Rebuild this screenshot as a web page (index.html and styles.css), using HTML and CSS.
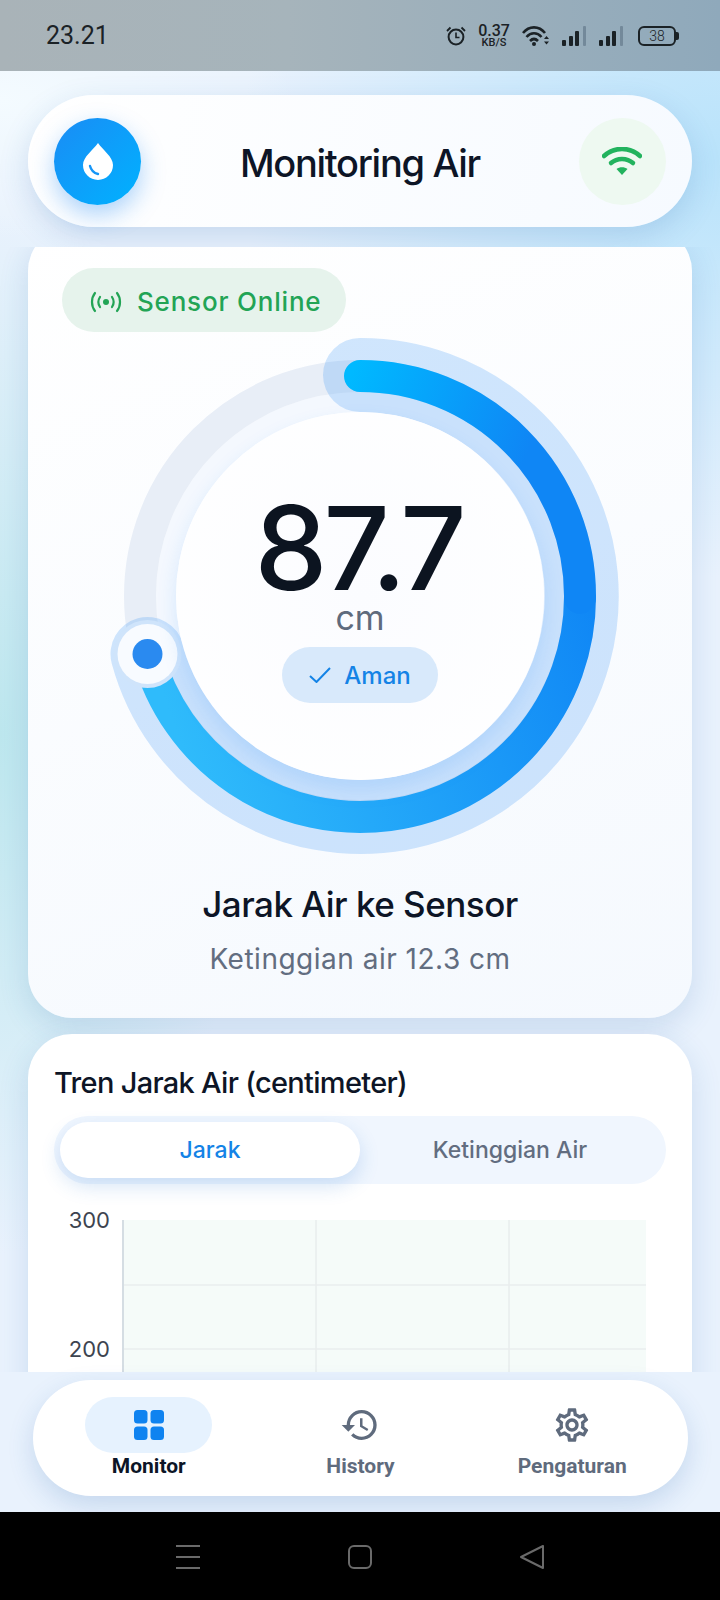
FILE: index.html
```html
<!DOCTYPE html>
<html lang="id">

<head>
    <meta charset="UTF-8">
    <meta name="viewport" content="width=device-width">
    <title>Monitoring Air</title>
    <link rel="stylesheet" href="styles.css">
</head>

<body>
    <div class="statusbar">
        <span class="time">23.21</span>
        <div class="status-icons">
            <svg width="20" height="20" viewBox="0 0 20 20" fill="none" stroke="#1b2226">
                <circle cx="10" cy="11" r="7.4" stroke-width="2" />
                <path d="M10 6.500V11.500H13.500" stroke-width="1.6" />
                <path d="M1 5 4.500 1.500M19 5 15.500 1.500" stroke-width="1.8" />
            </svg>
            <div class="speed"><b>0.37</b><small>KB/S</small></div>
            <svg width="28" height="20" viewBox="0 0 28 20" fill="none" stroke="#1b2226" stroke-width="2.6">
                <path d="M1 7C7-.5 17-.5 23 7" />
                <path d="M4.500 11C9 6 15 6 19.500 11" />
                <path d="M8 15C10.500 12.500 13.500 12.500 16 15" />
                <circle cx="12" cy="18" r="2" fill="#1b2226" stroke="none" />
                <path d="M24.500 10 27 13H22ZM24.500 18.500 22 15.500H27Z" fill="#1b2226" stroke="none" />
            </svg>
            <svg width="25" height="20" viewBox="0 0 25 20" fill="#1b2226">
                <rect x="0" y="14" width="4" height="6" rx="1" />
                <rect x="7" y="10" width="4" height="10" rx="1" />
                <rect x="13" y="5" width="4" height="15" rx="1" />
                <rect x="21" y="0" width="3" height="20" rx="1" fill="#73899a" />
            </svg>
            <svg width="25" height="20" viewBox="0 0 25 20" fill="#1b2226">
                <rect x="0" y="14" width="4" height="6" rx="1" />
                <rect x="7" y="10" width="4" height="10" rx="1" />
                <rect x="13" y="5" width="4" height="15" rx="1" />
                <rect x="21" y="0" width="3" height="20" rx="1" fill="#73899a" />
            </svg>
            <div class="battery">38</div>
        </div>
    </div>

    <div class="screen">
        <div class="topbar">
            <header class="header">
                <div class="logo">
                    <svg width="32" height="37" viewBox="0 0 32 37">
                        <path d="M16 0C21 7 31 14 31 22A15 15 0 0 1 1 22C1 14 11 7 16 0Z" fill="#fff" />
                        <path d="M8 23C9 27 12 30 16 31" fill="none" stroke="#1696f7" stroke-width="2.4" stroke-linecap="round" />
                    </svg>
                </div>
                <h1>Monitoring Air</h1>
                <div class="wifi">
                    <svg width="40" height="28" viewBox="0 0 40 28" fill="none" stroke="#22b35e" stroke-width="4.500">
                        <path d="M2 9C12-.5 28-.5 38 9" stroke-linecap="round" />
                        <path d="M9 16C15 10.500 25 10.500 31 16" stroke-linecap="round" />
                        <path d="M20 28 14.500 22C17.500 19.500 22.500 19.500 25.500 22Z" fill="#22b35e" stroke="none" />
                    </svg>
                </div>
            </header>
        </div>

        <main class="content">
            <section class="card card-gauge">
                <div class="online">
                    <svg width="32" height="22" viewBox="0 0 32 22" fill="none" stroke="#22a455" stroke-width="2.200" stroke-linecap="round">
                        <path d="M5 2C1 7 1 15 5 20M27 2C31 7 31 15 27 20" />
                        <path d="M10 6C8 9 8 13 10 16M22 6C24 9 24 13 22 16" />
                        <circle cx="16" cy="11" r="3" fill="#22a455" stroke="none" />
                    </svg>
                    <span>Sensor Online</span>
                </div>

                <div class="gauge">
                    <svg width="520" height="520" viewBox="0 0 520 520" fill="none">
                        <defs>
                            <linearGradient id="arcTop" gradientUnits="userSpaceOnUse" x1="250" y1="40" x2="430" y2="110">
                                <stop offset="0" stop-color="#00b9ff" />
                                <stop offset="1" stop-color="#0f86f5" />
                            </linearGradient>
                            <linearGradient id="arcBottom" gradientUnits="userSpaceOnUse" x1="480" y1="200" x2="60" y2="350">
                                <stop offset="0" stop-color="#0f86f5" />
                                <stop offset="1" stop-color="#2fbbfb" />
                            </linearGradient>
                        </defs>
                        <circle cx="260" cy="260" r="194" stroke="#f4f8fe" stroke-width="20" />
                        <circle cx="260" cy="260" r="220" stroke="#e8eef7" stroke-width="32" />
                        <path d="M260 39A221 221 0 1 1 47.500 318" stroke="#1e88f5" stroke-opacity=".2" stroke-width="74" stroke-linecap="round" />
                        <path d="M480 260A220 220 0 0 1 47.500 318" stroke="url(#arcBottom)" stroke-width="32" />
                        <path d="M260 40A220 220 0 0 1 480 262" stroke="url(#arcTop)" stroke-width="32" stroke-linecap="round" />
                        <circle cx="47.500" cy="318" r="34" fill="#cfe4fb" />
                        <circle cx="47.500" cy="318" r="30" fill="#f8fbff" />
                        <circle cx="47.500" cy="318" r="15" fill="#2a8af0" />
                    </svg>
                    <div class="gauge-center">
                        <div class="value">87.7</div>
                        <div class="unit">cm</div>
                        <div class="safe">
                            <svg width="22" height="16" viewBox="0 0 22 16" fill="none" stroke="#1483e6" stroke-width="2">
                                <path d="M1 9 7.500 15 21 1" />
                            </svg>
                            <span>Aman</span>
                        </div>
                    </div>
                </div>

                <h2>Jarak Air ke Sensor</h2>
                <p class="level">Ketinggian air 12.3 cm</p>
            </section>

            <section class="card card-chart">
                <h3>Tren Jarak Air (centimeter)</h3>
                <div class="tabs">
                    <div class="tab active">Jarak</div>
                    <div class="tab">Ketinggian Air</div>
                </div>
                <svg class="chart" width="610" height="192" viewBox="0 -12 610 192">
                    <rect x="69" y="0" width="523" height="180" fill="#f5fbf9" />
                    <path d="M69 65H592M69 129H592M262 0V180M455 0V180" stroke="#e9eeee" stroke-width="1.600" fill="none" />
                    <path d="M69 0V180" stroke="#d5dde3" stroke-width="2" fill="none" />
                    <text x="56" y="8" text-anchor="end">300</text>
                    <text x="56" y="137" text-anchor="end">200</text>
                </svg>
            </section>
        </main>

        <div class="bottom">
            <nav class="nav">
                <a class="nav-item active">
                    <span class="nav-icon">
                        <svg width="32" height="32" viewBox="0 0 32 32" fill="#0f83f0">
                            <rect x="1" y="1" width="13.500" height="13.500" rx="3.500" />
                            <rect x="17.500" y="1" width="13.500" height="13.500" rx="3.500" />
                            <rect x="1" y="17.500" width="13.500" height="13.500" rx="3.500" />
                            <rect x="17.500" y="17.500" width="13.500" height="13.500" rx="3.500" />
                        </svg>
                    </span>
                    Monitor
                </a>
                <a class="nav-item">
                    <span class="nav-icon">
                        <svg width="40" height="40" viewBox="0 0 24 24" fill="#5f6b7d">
                            <path d="M13 3a9 9 0 0 0-9 9H1l3.890 3.890.07.14L9 12H6c0-3.870 3.130-7 7-7s7 3.130 7 7-3.130 7-7 7c-1.930 0-3.680-.79-4.940-2.060l-1.420 1.420A8.954 8.954 0 0 0 13 21a9 9 0 0 0 0-18zm-1 5v5l4.280 2.540.72-1.210-3.500-2.080V8H12z" />
                        </svg>
                    </span>
                    History
                </a>
                <a class="nav-item">
                    <span class="nav-icon">
                        <svg width="40" height="40" viewBox="0 0 24 24" fill="#5f6b7d">
                            <path d="M19.430 12.980c.04-.32.07-.64.07-.98 0-.34-.03-.66-.07-.98l2.110-1.650c.19-.15.24-.42.12-.64l-2-3.460a.5.5 0 0 0-.61-.22l-2.490 1c-.52-.4-1.080-.73-1.690-.98l-.38-2.650A.488.488 0 0 0 14 2h-4c-.25 0-.46.18-.49.42l-.38 2.650c-.61.25-1.170.59-1.690.98l-2.490-1a.566.566 0 0 0-.18-.03c-.17 0-.34.09-.43.25l-2 3.460c-.13.22-.07.49.12.64l2.110 1.650c-.04.32-.07.65-.07.98 0 .33.03.66.07.98l-2.110 1.650c-.19.15-.24.42-.12.64l2 3.460a.5.5 0 0 0 .61.22l2.490-1c.52.4 1.080.73 1.690.98l.38 2.650c.03.24.24.42.49.42h4c.25 0 .46-.18.49-.42l.38-2.650c.61-.25 1.170-.59 1.690-.98l2.490 1c.06.02.12.03.18.03.17 0 .34-.09.43-.25l2-3.460c.12-.22.07-.49-.12-.64l-2.110-1.650zm-1.980-1.710c.04.31.05.52.05.73 0 .21-.02.43-.05.73l-.14 1.130.89.7 1.080.84-.7 1.210-1.270-.51-1.040-.42-.9.68c-.43.32-.84.56-1.250.73l-1.060.43-.16 1.130-.2 1.350h-1.400l-.19-1.350-.16-1.130-1.060-.43c-.43-.18-.83-.41-1.230-.71l-.91-.7-1.060.43-1.270.51-.7-1.210 1.080-.84.89-.7-.14-1.130c-.03-.31-.05-.54-.05-.74s.02-.43.05-.73l.14-1.130-.89-.7-1.080-.84.7-1.210 1.270.51 1.040.42.9-.68c.43-.32.84-.56 1.250-.73l1.060-.43.16-1.130.2-1.350h1.390l.19 1.350.16 1.130 1.060.43c.43.18.83.41 1.230.71l.91.7 1.060-.43 1.270-.51.7 1.210-1.070.85-.89.7.14 1.130zM12 8c-2.210 0-4 1.790-4 4s1.790 4 4 4 4-1.790 4-4-1.790-4-4-4zm0 6c-1.100 0-2-.9-2-2s.9-2 2-2 2 .9 2 2-.9 2-2 2z" />
                        </svg>
                    </span>
                    Pengaturan
                </a>
            </nav>
        </div>
    </div>

    <div class="sysnav">
        <svg width="24" height="24" viewBox="0 0 24 24" stroke="#6a6a6a" stroke-width="2" fill="none">
            <path d="M0 1H24M0 12H24M0 23H24" />
        </svg>
        <svg width="24" height="24" viewBox="0 0 24 24" stroke="#6a6a6a" stroke-width="2" fill="none">
            <rect x="1" y="1" width="22" height="22" rx="5" />
        </svg>
        <svg width="24" height="24" viewBox="0 0 24 24" stroke="#6a6a6a" stroke-width="2" fill="none" stroke-linejoin="round">
            <path d="M23 1V23L1 12Z" />
        </svg>
    </div>
</body>

</html>
```

FILE: styles.css
```css
* {
    box-sizing: border-box;
}

body {
    font-family: 'Inter', sans-serif;
    width: 720px;
    height: 1600px;
    margin: 0;
    overflow: hidden;
    display: flex;
    flex-direction: column;
    color: #0d1526;
}

h1,
h2,
h3,
p {
    margin: 0;
}

/* barra del sistema */
.statusbar {
    height: 71px;
    flex: none;
    padding: 0 44px 0 46px;
    display: flex;
    justify-content: space-between;
    align-items: center;
    background: linear-gradient(90deg, #a9b3b8, #a6b4bb 40%, #8fa9bb);
    color: #1b2226;
}

.time {
    font-family: 'Roboto', sans-serif;
    font-size: 25px;
    font-weight: 400;
}

.status-icons {
    display: flex;
    align-items: center;
    gap: 12px;
}

.speed {
    width: 32px;
    display: flex;
    flex-direction: column;
    align-items: center;
    font-family: 'Roboto', sans-serif;
}

.speed b {
    font-size: 16px;
    font-weight: 500;
    line-height: 14px;
}

.speed small {
    font-size: 11px;
    font-weight: 500;
    line-height: 10px;
}

.battery {
    width: 38px;
    height: 20px;
    margin-left: 2px;
    border: 2px solid #1b2226;
    border-radius: 6px;
    font-family: 'Roboto', sans-serif;
    font-size: 14px;
    font-weight: 300;
    line-height: 16px;
    text-align: center;
    position: relative;
}

.battery::after {
    content: "";
    position: absolute;
    right: -5px;
    top: 4px;
    width: 3px;
    height: 8px;
    background-color: #1b2226;
    border-radius: 0 2px 2px 0;
}

/* fondo de la app */
.screen {
    flex: 1;
    min-height: 0;
    display: flex;
    flex-direction: column;
    background:
        radial-gradient(ellipse 260px 520px at 0 46%, #bde7ee, transparent),
        radial-gradient(ellipse 480px 420px at 100% 6%, #b9e3fb, transparent),
        radial-gradient(ellipse 300px 140px at 0 2%, #f4fbff, transparent),
        #e9f2fd;
}

.topbar {
    height: 176px;
    flex: none;
    padding: 24px 28px 0;
    overflow: hidden;
}

.header {
    height: 132px;
    padding: 0 26px;
    display: flex;
    justify-content: space-between;
    align-items: center;
    border-radius: 66px;
    background: linear-gradient(100deg, #fff, #f6faff);
    box-shadow: 0 10px 30px rgba(40, 100, 170, 0.18);
}

.logo,
.wifi {
    width: 87px;
    height: 87px;
    border-radius: 50%;
    display: flex;
    justify-content: center;
    align-items: center;
}

.logo {
    background: linear-gradient(135deg, #1a8cf5, #00b2ff);
    box-shadow: 0 10px 24px rgba(20, 130, 240, 0.35);
}

.wifi {
    background-color: #eef9f1;
}

h1 {
    margin-top: 4px;
    font-size: 38px;
    font-weight: 500;
    letter-spacing: -1.3px;
}

.content {
    flex: 1;
    min-height: 0;
    padding: 0 28px;
    overflow: hidden;
}

.card {
    border-radius: 44px;
    background: linear-gradient(160deg, #fff, #f5f9fe);
    box-shadow: 0 10px 30px rgba(40, 100, 170, 0.16);
}

.card-gauge {
    height: 791px;
    margin-top: -20px;
    padding: 41px 34px 0;
    text-align: center;
}

.online {
    width: 284px;
    height: 64px;
    padding: 3px 0 0 28px;
    display: flex;
    align-items: center;
    gap: 15px;
    border-radius: 32px;
    background-color: #e6f3ec;
    color: #22a455;
    font-size: 26px;
    font-weight: 500;
    letter-spacing: 0.8px;
}

.gauge {
    width: 520px;
    height: 520px;
    margin: 4px 0 0 38px;
    position: relative;
}

.gauge svg {
    display: block;
}

.gauge-center {
    position: absolute;
    left: 76px;
    top: 76px;
    width: 368px;
    height: 368px;
    padding-top: 86px;
    display: flex;
    flex-direction: column;
    align-items: center;
    border-radius: 50%;
    background: radial-gradient(circle, #fbfcff, #fff);
    box-shadow: 0 10px 20px rgba(30, 136, 245, 0.14);
}

.value {
    margin-left: -3px;
    font-size: 116px;
    font-weight: 500;
    line-height: 100px;
    letter-spacing: -4px;
    color: #0c1420;
}

.unit {
    margin-top: 2px;
    font-size: 34px;
    line-height: 36px;
    color: #5f6b7d;
}

.safe {
    width: 156px;
    height: 56px;
    margin-top: 11px;
    display: flex;
    justify-content: center;
    align-items: center;
    gap: 13px;
    border-radius: 28px;
    background-color: #d8e9fb;
    color: #1483e6;
    font-size: 24px;
    font-weight: 500;
}

h2 {
    margin-top: 27px;
    font-size: 35px;
    font-weight: 500;
    line-height: 42px;
    letter-spacing: -0.5px;
}

.level {
    margin-top: 14px;
    font-size: 28px;
    line-height: 40px;
    letter-spacing: 0.5px;
    color: #626d80;
}

.card-chart {
    height: 500px;
    margin-top: 16px;
    padding: 29px 26px 0;
    background: #fff;
}

h3 {
    font-size: 29px;
    font-weight: 500;
    line-height: 40px;
    letter-spacing: -0.7px;
}

.tabs {
    height: 68px;
    margin-top: 13px;
    padding: 6px;
    display: grid;
    grid-template-columns: 1fr 1fr;
    border-radius: 34px;
    background-color: #f0f6fe;
}

.tab {
    display: flex;
    justify-content: center;
    align-items: center;
    border-radius: 28px;
    color: #626d80;
    font-size: 23px;
    font-weight: 500;
}

.tab.active {
    background-color: #fff;
    color: #1483e6;
    box-shadow: 0 8px 20px rgba(40, 120, 210, 0.2);
}

.chart {
    display: block;
    margin-top: 24px;
}

.chart text {
    font-family: 'Inter', sans-serif;
    font-size: 22px;
    fill: #3d4450;
}

.bottom {
    height: 140px;
    flex: none;
    padding: 8px 32px 0 33px;
}

.nav {
    height: 116px;
    padding: 17px 10px 0;
    display: grid;
    grid-template-columns: repeat(3, 1fr);
    border-radius: 58px;
    background-color: #fff;
    box-shadow: 0 10px 26px rgba(40, 100, 170, 0.18);
}

.nav-item {
    display: flex;
    flex-direction: column;
    align-items: center;
    font-family: 'Roboto', sans-serif;
    font-size: 21px;
    font-weight: 700;
    line-height: 26px;
    color: #5f6b7d;
}

.nav-icon {
    width: 127px;
    height: 56px;
    border-radius: 28px;
    display: flex;
    justify-content: center;
    align-items: center;
}

.nav-item.active {
    color: #0d1526;
}

.nav-item.active .nav-icon {
    background-color: #e6f2fe;
}

/* navegacion inferior */
.sysnav {
    height: 88px;
    flex: none;
    padding: 33px 176px 0;
    display: flex;
    justify-content: space-between;
    align-items: flex-start;
    background-color: #000;
}
```
